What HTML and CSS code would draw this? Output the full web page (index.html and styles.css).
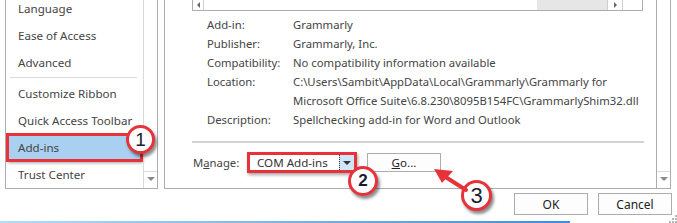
FILE: index.html
```html
<!DOCTYPE html>
<html>
<head>
<meta charset="utf-8">
<link rel="stylesheet" href="styles.css">
</head>
<body>
<div class="dialog">
  <div class="main">
    <div class="nav">
      <div class="nav-list">
        <div class="nav-item">Language</div>
        <div class="nav-item">Ease of Access</div>
        <div class="nav-item">Advanced</div>
        <div class="nav-sep"></div>
        <div class="nav-item">Customize Ribbon</div>
        <div class="nav-item">Quick Access Toolbar</div>
        <div class="nav-item selected">Add-ins</div>
        <div class="nav-item">Trust Center</div>
      </div>
      <div class="vscroll">
        <div class="vbtn"><span class="tri-down"></span></div>
      </div>
    </div>
    <div class="content">
      <div class="addin-list">
        <div class="hbtn left"><span class="tri-left"></span></div>
        <div class="htrack"></div>
        <div class="hthumb"></div>
        <div class="hbtn right"><span class="tri-right"></span></div>
        <div class="hcorner"></div>
      </div>
      <div class="details">
        <div class="lbl">Add-in:</div><div class="val">Grammarly</div>
        <div class="lbl">Publisher:</div><div class="val">Grammarly, Inc.</div>
        <div class="lbl">Compatibility:</div><div class="val">No compatibility information available</div>
        <div class="lbl">Location:</div><div class="val">C:\Users\Sambit\AppData\Local\Grammarly\Grammarly for<br>Microsoft Office Suite\6.8.230\8095B154FC\GrammarlyShim32.dll</div>
        <div class="lbl">Description:</div><div class="val">Spellchecking add-in for Word and Outlook</div>
      </div>
      <div class="sep"></div>
      <div class="manage">
        <div class="manage-lbl">M<u>a</u>nage:</div>
        <div class="combo">
          <div class="combo-text">COM Add-ins</div>
          <div class="combo-btn"><span class="tri-down dark"></span></div>
        </div>
        <div class="btn go"><u>G</u>o...</div>
      </div>
    </div>
    <div class="outer-scroll">
      <div class="vbtn"><span class="tri-down"></span></div>
    </div>
  </div>
  <div class="footer">
    <div class="btn big">OK</div>
    <div class="btn big">Cancel</div>
  </div>
  <div class="progress"></div>
</div>

<div class="badge b1">1</div>
<div class="badge b2">2</div>
<div class="badge b3">3</div>
<svg class="arrow" width="677" height="223" viewBox="0 0 677 223">
  <line x1="444" y1="176" x2="466" y2="190" stroke="#e8323a" stroke-width="4" stroke-linecap="round"/>
  <polygon points="434,169 453,171 442,183" fill="#e8323a"/>
</svg>
<svg class="grip" width="8" height="8" viewBox="0 0 8 8">
  <rect x="6" y="0" width="2" height="2" fill="#b8b8b8"/>
  <rect x="3" y="3" width="2" height="2" fill="#b8b8b8"/>
  <rect x="6" y="3" width="2" height="2" fill="#b8b8b8"/>
  <rect x="0" y="6" width="2" height="2" fill="#b8b8b8"/>
  <rect x="3" y="6" width="2" height="2" fill="#b8b8b8"/>
  <rect x="6" y="6" width="2" height="2" fill="#b8b8b8"/>
</svg>
</body>
</html>
```
FILE: styles.css
```css
* { box-sizing: border-box; }
html, body { margin: 0; padding: 0; }
body {
  width: 677px;
  height: 223px;
  overflow: hidden;
  background: #ffffff;
  position: relative;
  font-family: "Noto Sans", "Open Sans", sans-serif;
  font-size: 11.3px;
  color: #444444;
}
.dialog { display: flex; flex-direction: column; height: 223px; }
.main { display: flex; height: 189px; }

.nav {
  margin-left: 5px;
  width: 153px;
  height: 189px;
  border: 1px solid #acacac;
  border-top: none;
  display: flex;
  overflow: hidden;
}
.nav-list { flex: 1; margin-top: -5px; padding: 0 2px 0 1px; }
.nav-item {
  height: 27px;
  line-height: 27px;
  padding-left: 11px;
  font-size: 11.6px;
  color: #444444;
  white-space: nowrap;
}
.nav-item.selected {
  background: #a9d0f0;
  outline: 3px solid #e8323a;
  outline-offset: -2px;
  box-shadow: 1px 2px 3px rgba(0,0,0,0.35);
  margin-right: -1px;
}
.nav-sep { height: 4px; margin: 0 4px 0 3px; border-top: 1px solid #dadada; transform: translateY(1px); }

.vscroll, .outer-scroll {
  display: flex;
  flex-direction: column;
  justify-content: flex-end;
  padding-bottom: 2px;
}
.vscroll { width: 14px; border-left: 1px solid #dadada; }
.vbtn {
  height: 15px;
  display: flex;
  align-items: center;
  justify-content: center;
  border-top: 1px solid #dadada;
}
.tri-down {
  width: 0; height: 0;
  border-left: 4px solid transparent;
  border-right: 4px solid transparent;
  border-top: 4px solid #8a8a8a;
}
.tri-down.dark { border-top-color: #333333; }
.tri-left {
  width: 0; height: 0;
  border-top: 3px solid transparent;
  border-bottom: 3px solid transparent;
  border-right: 3px solid #666666;
}
.tri-right {
  width: 0; height: 0;
  border-top: 3px solid transparent;
  border-bottom: 3px solid transparent;
  border-left: 3px solid #666666;
}

.content {
  margin-left: 6px;
  width: 492px;
  height: 189px;
  border-left: 1px solid #acacac;
  border-bottom: 1px solid #acacac;
  padding-left: 27px;
}
.addin-list {
  width: 451px;
  height: 11px;
  border: 1px solid #acacac;
  border-top: none;
  display: flex;
}
.hbtn {
  display: flex;
  align-items: center;
  justify-content: center;
}
.hbtn.left { width: 11px; border-right: 1px solid #cfcfcf; }
.hbtn.right { width: 16px; border-left: 1px solid #cfcfcf; border-right: 1px solid #cfcfcf; }
.htrack { flex: 1; background: #ffffff; }
.hthumb { width: 70px; background: #e6e6e6; }
.hcorner { width: 19px; }

.details {
  margin-top: 4px;
  padding-left: 15px;
  display: grid;
  grid-template-columns: 86px auto;
  line-height: 19px;
  white-space: nowrap;
}
.sep {
  margin-top: 12px;
  width: 452px;
  height: 2px;
  background: #d2d2d2;
}
.manage {
  margin-top: 9px;
  display: flex;
  align-items: center;
  padding-left: 1px;
}
.manage-lbl { width: 54px; }
.combo {
  width: 110px;
  height: 21px;
  border: 3px solid #e8323a;
  box-shadow: 1px 2px 3px rgba(0,0,0,0.35);
  display: flex;
  background: #ffffff;
}
.combo-text { flex: 1; padding-left: 7px; font-size: 11.6px; line-height: 15px; color: #333333; }
.combo-btn {
  width: 15px;
  background: #cde6f8;
  border-left: 1px dotted #333333;
  display: flex;
  align-items: center;
  justify-content: center;
}
.btn {
  border: 1px solid #adadad;
  background: #fdfdfd;
  display: flex;
  align-items: center;
  justify-content: center;
  color: #222222;
}
.btn.go { margin-left: 10px; width: 74px; height: 19px; font-size: 11.6px; }

.outer-scroll {
  width: 15px;
  height: 189px;
  border-left: 1px solid #acacac;
  border-right: 1px solid #acacac;
  border-bottom: 1px solid #acacac;
}

.footer {
  margin-top: 4px;
  display: flex;
  justify-content: flex-end;
  gap: 10px;
  padding-right: 5px;
}
.btn.big { width: 74px; height: 22px; font-size: 12px; }
.progress {
  margin-top: 6px;
  width: 570px;
  height: 2px;
  background: linear-gradient(to right, #b6dbf4, #3b8fd9);
}

.badge {
  position: absolute;
  border-radius: 50%;
  background: #ffffff;
  border: 3px solid #e8323a;
  box-shadow: 2px 3px 3px rgba(0,0,0,0.45);
  display: flex;
  align-items: center;
  justify-content: center;
  font-family: "Liberation Sans", Arial, sans-serif;
  color: #1c1c30;
}
.b1 { left: 126px; top: 125px; width: 29px; height: 29px; font-size: 19px; }
.b2 { left: 348px; top: 166px; width: 30px; height: 30px; font-size: 17px; font-weight: bold; }
.b3 { left: 461px; top: 180px; width: 31px; height: 31px; font-size: 22px; }
.arrow { position: absolute; left: 0; top: 0; pointer-events: none; }
.grip { position: absolute; right: 0; bottom: 0; }
```
